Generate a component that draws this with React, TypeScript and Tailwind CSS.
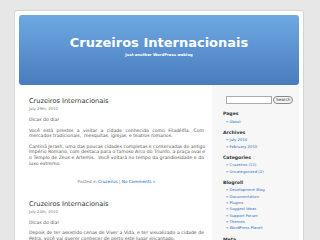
const sidebar = [
  { title: 'Pages', items: ['About'] },
  { title: 'Archives', items: ['July 2010', 'February 2010'] },
  { title: 'Categories', items: ['Cruzeiros (11)', 'Uncategorized (2)'] },
  {
    title: 'Blogroll',
    items: [
      'Development Blog',
      'Documentation',
      'Plugins',
      'Suggest Ideas',
      'Support Forum',
      'Themes',
      'WordPress Planet',
    ],
  },
  { title: 'Meta', items: ['Log in'] },
];

// each entry is one printed line; every line but the last is justified
function Para({ lines }: { lines: string[] }) {
  return (
    <p>
      {lines.map((l, i) => (
        <span
          key={i}
          className={`block whitespace-pre ${i < lines.length - 1 ? '[text-align-last:justify]' : ''}`}
        >
          {l}
        </span>
      ))}
    </p>
  );
}

function Post({ date, children, footer = true }: { date: string; children: React.ReactNode; footer?: boolean }) {
  return (
    <div className="mb-[15.5px]">
      <h2 className="text-[6.6px] leading-[8px] text-[#333]">Cruzeiros Internacionais</h2>
      <p className="mt-[1px] text-[3.8px] leading-[5px] text-[#777]">{date}</p>
      <div className="mt-[6px] space-y-[5px] text-[4.6px] leading-[5.6px] text-[#555] text-justify">
        {children}
      </div>
      {footer && (
        <p className="mt-[13px] text-center text-[4.2px] leading-[5px] text-[#777]">
          Posted in <span className="text-[#06c]">Cruzeiros</span> |{' '}
          <span className="text-[#06c]">No Comments »</span>
        </p>
      )}
    </div>
  );
}

export default function App() {
  return (
    <div className="h-[240px] w-[320px] overflow-hidden bg-[#e7e7e7] pt-[10px] font-['DejaVu_Sans',sans-serif]">
      <div className="ml-[14px] w-[290px] h-[240px] bg-white border border-[#d4d4d4] rounded-t-[3px] p-[4px]">
        <div className="h-[70px] rounded-[3px] bg-gradient-to-b from-[#6ea9e2] to-[#497cbd] flex flex-col items-center pt-[21px]">
          <h1 className="text-[13px] leading-[14px] font-bold text-white">Cruzeiros Internacionais</h1>
          <p className="mt-[2px] text-[3.8px] leading-[5px] font-bold text-white">Just another WordPress weblog</p>
        </div>
        <div className="flex">
          <div className="w-[175px] ml-[10px] pt-[12px]">
            <Post date="July 29th, 2010">
              <p>Dicas do dia!</p>
              <Para
                lines={[
                  'Você está prestes a visitar a cidade conhecida como Filadélfia. Com',
                  'mercados tradicionais,  mesquitas, igrejas, e teatros romanos.',
                ]}
              />
              <Para
                lines={[
                  'Cantinã Jerash, uma das poucas cidades completas e conservadas do antigo',
                  'Império Romano, com destaca para o famoso Arco do Triunfo, a praça oval e',
                  'o Templo de Zeus e Artemis.  Você voltará no tempo da grandiosidade e do',
                  'luxo extremo.',
                ]}
              />
            </Post>
            <Post date="July 24th, 2010" footer={false}>
              <p>Dicas do dia!</p>
              <Para
                lines={[
                  'Depois de ter assistido cenas de Viver a Vida, e ter visualizado a cidade de',
                  'Petra, você vai querer conhecer de perto este lugar encantado.',
                ]}
              />
            </Post>
          </div>
          <div className="ml-[8px] w-[87px] bg-[#f7f7f7] pl-[11px] pt-[11px] h-[240px]">
            <div className="flex items-center gap-[1px] ml-[3px]">
              <div className="w-[46px] h-[8px] bg-white border border-[#aaa]" />
              <div className="h-[8px] px-[2px] rounded-[4px] border border-[#888] bg-[#f4f4f4] text-[4.2px] leading-[6px] text-[#333]">
                Search
              </div>
            </div>
            <div className="mt-[7px] space-y-[5px]">
              {sidebar.map((s) => (
                <div key={s.title}>
                  <h2 className="text-[4.6px] leading-[6px] font-bold text-[#333]">{s.title}</h2>
                  <ul className="ml-[3px] mt-[1.5px]">
                    {s.items.map((i) => (
                      <li key={i} className="text-[3.8px] leading-[6.3px] text-[#2a6fc0]">
                        » {i}
                      </li>
                    ))}
                  </ul>
                </div>
              ))}
            </div>
          </div>
        </div>
      </div>
    </div>
  );
}
